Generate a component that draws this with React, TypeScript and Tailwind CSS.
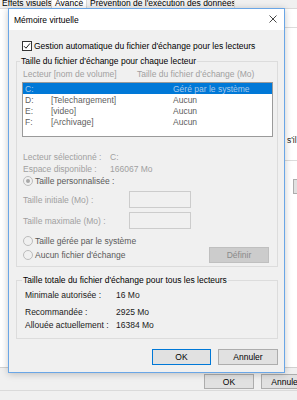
import React from "react";

function Checkbox() {
  return (
    <span className="flex h-[10px] w-[10px] shrink-0 items-center justify-center border border-[#333333] bg-white">
      <svg width="8" height="8" viewBox="0 0 8 8">
        <path d="M1 4.2 L3 6.2 L7 1.4" fill="none" stroke="#222222" strokeWidth="1" />
      </svg>
    </span>
  );
}

function Radio({ checked }: { checked?: boolean }) {
  return (
    <span className="flex h-[10px] w-[10px] shrink-0 items-center justify-center rounded-full border border-[#bcbcbc] bg-[#f0f0f0]">
      {checked && <span className="h-[4px] w-[4px] rounded-full bg-[#a8a8a8]" />}
    </span>
  );
}

const drives = [
  { l: "D:", n: "[Telechargement]", s: "Aucun" },
  { l: "E:", n: "[video]", s: "Aucun" },
  { l: "F:", n: "[Archivage]", s: "Aucun" },
];

export default function App() {
  return (
    <div className="relative h-[400px] w-[297px] overflow-hidden bg-[#f0f0f0] font-['Liberation_Sans',Arial,sans-serif] text-[8.5px] leading-[10px] text-black">
      {/* background window: tabs */}
      <div className="flex h-[9px] items-start border-b border-[#d9d9d9]">
        <div className="h-[9px] w-[52px] overflow-hidden border-r border-[#d9d9d9] pl-[2px]">
          <div className="-mt-[2px] whitespace-nowrap">Effets visuels</div>
        </div>
        <div className="h-[9px] w-[35px] overflow-hidden border-r border-[#d9d9d9] bg-white pl-[3px]">
          <div className="-mt-[2px] whitespace-nowrap">Avancé</div>
        </div>
        <div className="h-[9px] w-[148px] overflow-hidden border-r border-[#d9d9d9] pl-[3px]">
          <div className="-mt-[2px] whitespace-nowrap">Prévention de l'exécution des données</div>
        </div>
      </div>
      {/* background window: panel */}
      <div className="flex h-[359px] flex-col border-b border-[#d0d0d0] bg-white pl-[285px]">
        <div className="mt-[18px] h-px bg-[#dcdcdc]" />
        <div className="mt-[107px] whitespace-nowrap pl-[2px] text-[#222222]">s'il</div>
        <div className="mt-[15px] h-px bg-[#dcdcdc]" />
        <div className="ml-[8px] mt-[18px] h-[15px] w-[40px] border border-[#adadad] bg-[#e1e1e1]" />
      </div>
      {/* background window: buttons */}
      <div className="flex h-[22px] items-start gap-[7px] pl-[204px] pt-[6px]">
        <div className="flex h-[15px] w-[50px] shrink-0 items-center justify-center border border-[#adadad] bg-[#e1e1e1]">OK</div>
        <div className="flex h-[15px] w-[50px] shrink-0 items-center justify-center border border-[#adadad] bg-[#e1e1e1]">Annuler</div>
      </div>
      <div className="h-px bg-[#dadada]" />

      {/* dialog */}
      <div className="absolute left-[8px] top-[8px] flex h-[365px] w-[277px] flex-col border border-[#6aa6e6] bg-[#f0f0f0] shadow-[0_1px_7px_rgba(0,0,0,0.22)]">
        <div className="flex h-[21px] shrink-0 items-center justify-between bg-white pl-[5px] pr-[7px]">
          <span>Mémoire virtuelle</span>
          <svg width="8" height="8" viewBox="0 0 8 8" className="mb-[2px]">
            <path d="M0.5 0.5 L7.5 7.5 M7.5 0.5 L0.5 7.5" stroke="#333333" strokeWidth="0.9" />
          </svg>
        </div>
        <div className="flex flex-1 flex-col pl-[7px] pr-[6px]">
          <div className="ml-[6px] mt-[11px] flex h-[10px] items-center gap-[2px]">
            <Checkbox />
            <span className="whitespace-nowrap">Gestion automatique du fichier d'échange pour les lecteurs</span>
          </div>

          <fieldset className="mt-[5px] border border-[#dcdcdc] pb-[3px]">
            <legend className="ml-[3px] px-[1px] leading-[10px]">Taille du fichier d'échange pour chaque lecteur</legend>
            <div className="mt-[3px] flex h-[10px] text-[#a0a0a0]">
              <span className="ml-[6px] w-[114px] whitespace-nowrap">Lecteur [nom de volume]</span>
              <span className="whitespace-nowrap">Taille du fichier d'échange (Mo)</span>
            </div>
            <div className="ml-[5px] mt-[3px] h-[55px] w-[251px] border border-[#9a9a9a] bg-white">
              <div className="flex h-[11px] items-center bg-[#0078d7] text-[#a9c9ea]">
                <span className="ml-[2px] w-[26px]">C:</span>
                <span className="w-[122px]"></span>
                <span>Géré par le système</span>
              </div>
              {drives.map((d) => (
                <div key={d.l} className="flex h-[11px] items-center text-[#606060]">
                  <span className="ml-[2px] w-[26px]">{d.l}</span>
                  <span className="w-[122px] whitespace-nowrap">{d.n}</span>
                  <span>{d.s}</span>
                </div>
              ))}
            </div>

            <div className="mt-[14px] flex h-[11px] items-center text-[#a0a0a0]">
              <span className="ml-[6px] w-[87px] whitespace-nowrap">Lecteur sélectionné :</span>
              <span>C:</span>
            </div>
            <div className="mt-[1px] flex h-[11px] items-center text-[#a0a0a0]">
              <span className="ml-[6px] w-[87px] whitespace-nowrap">Espace disponible :</span>
              <span>166067 Mo</span>
            </div>
            <div className="ml-[6px] mt-[2px] flex h-[10px] items-center gap-[2px] text-[#5a5a5a]">
              <Radio checked />
              <span className="whitespace-nowrap">Taille personnalisée :</span>
            </div>
            <div className="mt-[5px] flex h-[17px] items-center text-[#a0a0a0]">
              <span className="ml-[6px] w-[106px] whitespace-nowrap">Taille initiale (Mo) :</span>
              <span className="h-[17px] w-[62px] border border-[#cccccc] bg-[#f0f0f0]" />
            </div>
            <div className="mt-[4px] flex h-[17px] items-center text-[#a0a0a0]">
              <span className="ml-[6px] w-[106px] whitespace-nowrap">Taille maximale (Mo) :</span>
              <span className="h-[17px] w-[62px] border border-[#cccccc] bg-[#f0f0f0]" />
            </div>
            <div className="ml-[6px] mt-[7px] flex h-[10px] items-center gap-[2px] text-[#5a5a5a]">
              <Radio />
              <span className="whitespace-nowrap">Taille gérée par le système</span>
            </div>
            <div className="mt-[1px] flex h-[16px] items-center">
              <div className="ml-[6px] flex items-center gap-[2px] text-[#5a5a5a]">
                <Radio />
                <span className="whitespace-nowrap">Aucun fichier d'échange</span>
              </div>
              <div className="ml-auto mr-[8px] flex h-[16px] w-[60px] items-center justify-center border border-[#bfbfbf] bg-[#cccccc] text-[#8a8a8a]">
                Définir
              </div>
            </div>
          </fieldset>

          <fieldset className="mt-[8px] border border-[#dcdcdc] pb-[8px]">
            <legend className="ml-[5px] px-[1px] leading-[10px]">Taille totale du fichier d'échange pour tous les lecteurs</legend>
            <div className="mt-[5px] flex h-[10px] items-center text-[#1a1a1a]">
              <span className="ml-[8px] w-[91px] whitespace-nowrap">Minimale autorisée :</span>
              <span>16 Mo</span>
            </div>
            <div className="mt-[7px] flex h-[10px] items-center text-[#1a1a1a]">
              <span className="ml-[8px] w-[91px] whitespace-nowrap">Recommandée :</span>
              <span>2925 Mo</span>
            </div>
            <div className="mt-[3px] flex h-[10px] items-center text-[#1a1a1a]">
              <span className="ml-[8px] w-[91px] whitespace-nowrap">Allouée actuellement :</span>
              <span>16384 Mo</span>
            </div>
          </fieldset>

          <div className="mt-[10px] flex justify-end gap-[7px]">
            <div className="flex h-[16px] w-[59px] items-center justify-center border border-[#0078d7] bg-[#e1e1e1]">OK</div>
            <div className="flex h-[16px] w-[60px] items-center justify-center border border-[#adadad] bg-[#e1e1e1]">Annuler</div>
          </div>
        </div>
      </div>
    </div>
  );
}
